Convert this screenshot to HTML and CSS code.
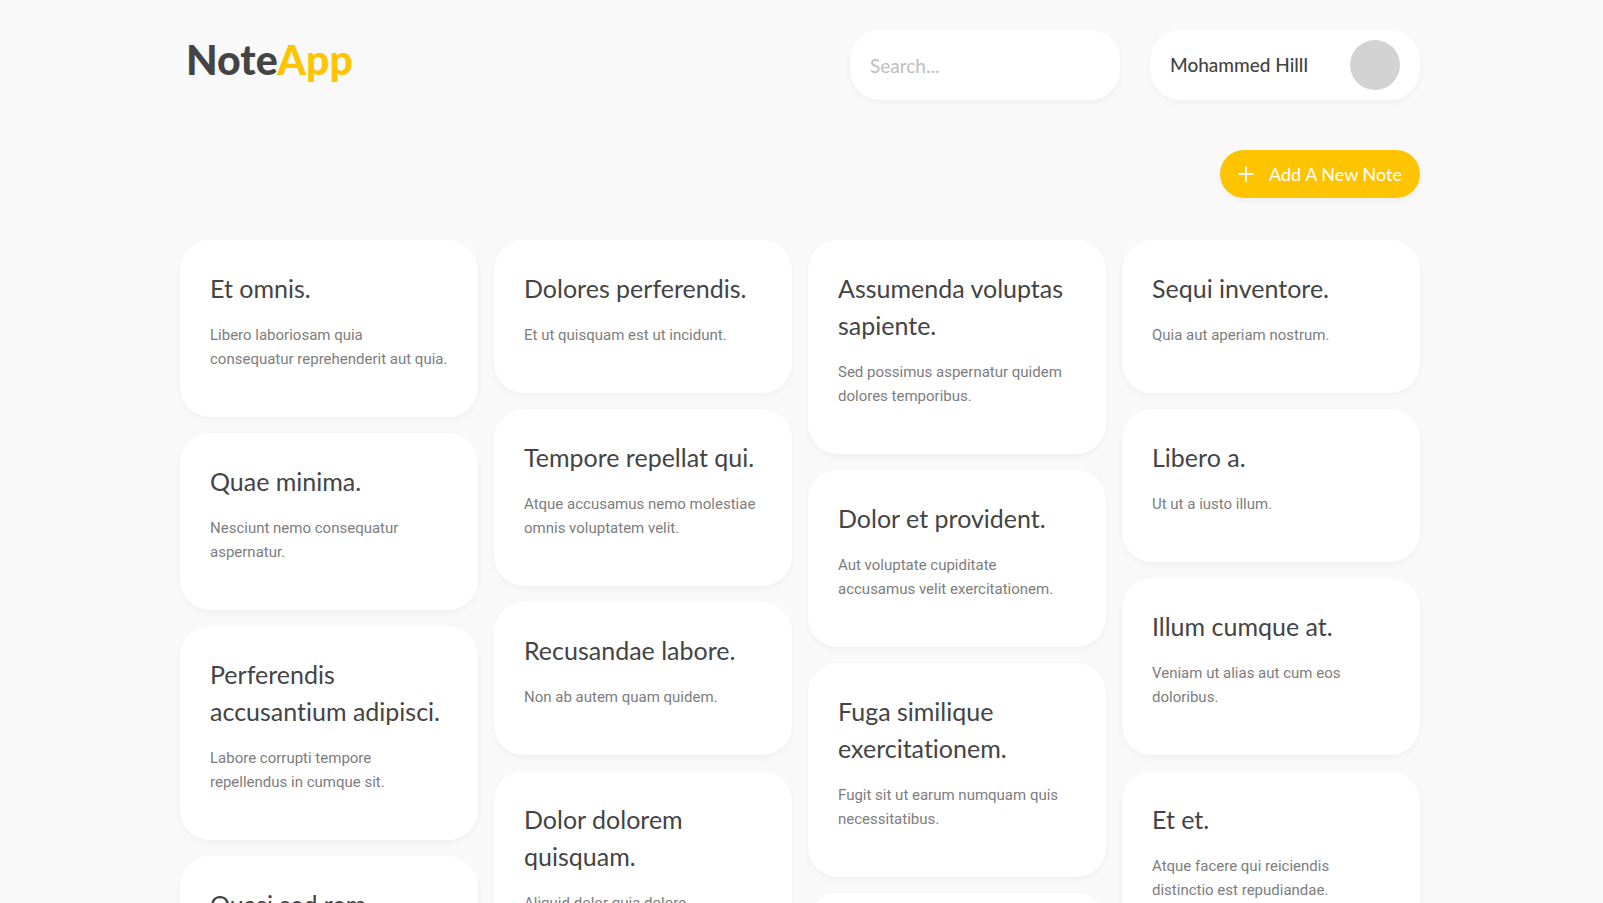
FILE: index.html
```html
<!DOCTYPE html>
<html lang="en">
<head>
<meta charset="utf-8">
<meta name="viewport" content="width=device-width, initial-scale=1">
<title>NoteApp</title>
<link rel="stylesheet" href="styles.css">
</head>
<body>
<div class="container">
  <header class="header">
    <a class="logo" href="#">Note<span class="logo-accent">App</span></a>
    <div class="header-tools">
      <input class="search" type="search" placeholder="Search..." aria-label="Search notes">
      <button class="profile" type="button"><span>Mohammed Hilll</span><span class="avatar"></span></button>
    </div>
  </header>
  <div class="actions">
    <button class="add-note" type="button">
      <svg class="add-icon" viewBox="0 0 24 24" aria-hidden="true"><path d="M19.500 13H13v6.500h-2V13H4.500v-2H11V4.500h2V11h6.500z" fill="currentColor"/></svg>
      Add A New Note
    </button>
  </div>
  <main class="notes">
    <div class="column">
      <article class="note"><h2>Et omnis.</h2><p>Libero laboriosam quia consequatur reprehenderit aut quia.</p></article>
      <article class="note"><h2>Quae minima.</h2><p>Nesciunt nemo consequatur aspernatur.</p></article>
      <article class="note"><h2>Perferendis accusantium adipisci.</h2><p>Labore corrupti tempore repellendus in cumque sit.</p></article>
      <article class="note"><h2>Quasi sed rem.</h2></article>
    </div>
    <div class="column">
      <article class="note"><h2>Dolores perferendis.</h2><p>Et ut quisquam est ut incidunt.</p></article>
      <article class="note"><h2>Tempore repellat qui.</h2><p>Atque accusamus nemo molestiae omnis voluptatem velit.</p></article>
      <article class="note"><h2>Recusandae labore.</h2><p>Non ab autem quam quidem.</p></article>
      <article class="note"><h2>Dolor dolorem quisquam.</h2><p>Aliquid dolor quia dolore</p></article>
    </div>
    <div class="column">
      <article class="note"><h2>Assumenda voluptas sapiente.</h2><p>Sed possimus aspernatur quidem dolores temporibus.</p></article>
      <article class="note"><h2>Dolor et provident.</h2><p>Aut voluptate cupiditate accusamus velit exercitationem.</p></article>
      <article class="note"><h2>Fuga similique exercitationem.</h2><p>Fugit sit ut earum numquam quis necessitatibus.</p></article>
      <article class="note"></article>
    </div>
    <div class="column">
      <article class="note"><h2>Sequi inventore.</h2><p>Quia aut aperiam nostrum.</p></article>
      <article class="note"><h2>Libero a.</h2><p>Ut ut a iusto illum.</p></article>
      <article class="note"><h2>Illum cumque at.</h2><p>Veniam ut alias aut cum eos doloribus.</p></article>
      <article class="note"><h2>Et et.</h2><p>Atque facere qui reiciendis distinctio est repudiandae.</p></article>
    </div>
  </main>
</div>
</body>
</html>
```

FILE: styles.css
```css
* { box-sizing: border-box; }

:root {
  --ink: #444;
  --muted: #7d7d7d;
  --accent: #ffc400;
  --shadow: 0 3px 6px rgba(0, 0, 0, 0.04);
  --display: "Google Sans", "Product Sans", Lato, sans-serif;
}

body {
  height: 100vh;
  margin: 0;
  padding: 0 3px 0 0;
  overflow: hidden;
  background: #f9f9f9;
  color: var(--ink);
  font-family: Roboto, sans-serif;
  font-variant-ligatures: no-common-ligatures;
}

.container {
  max-width: 1240px;
  margin: 0 auto;
  padding-top: 30px;
}

.header {
  display: flex;
  align-items: flex-start;
  justify-content: space-between;
}

.logo {
  padding: 0 6px;
  color: var(--ink);
  font-family: var(--display);
  font-size: 41px;
  font-weight: 900;
  line-height: 60px;
  text-decoration: none;
}

.logo-accent { color: var(--accent); }

.header-tools {
  display: flex;
  gap: 30px;
}

.search,
.profile {
  width: 270px;
  height: 70px;
  padding: 0 20px;
  border: 0;
  border-radius: 30px;
  background: #fff;
  box-shadow: var(--shadow);
  color: var(--ink);
  font-family: var(--display);
  font-size: 19px;
  line-height: 24px;
}

.search { appearance: none; outline: 0; }
.search::placeholder { color: #bdbdbd; opacity: 1; }

.profile {
  display: flex;
  align-items: center;
  justify-content: space-between;
  font-weight: 500;
}

.avatar {
  width: 50px;
  height: 50px;
  border-radius: 50%;
  background: #d3d3d3;
}

.actions {
  display: flex;
  justify-content: flex-end;
  margin: 50px 0 42px;
}

.add-note {
  display: flex;
  align-items: center;
  gap: 11px;
  width: 200px;
  height: 48px;
  padding: 0 14px;
  border: 0;
  border-radius: 24px;
  background: var(--accent);
  box-shadow: var(--shadow);
  color: #fff;
  font-family: var(--display);
  font-size: 18px;
  line-height: 24px;
  white-space: nowrap;
}

.add-icon {
  flex: none;
  width: 24px;
  height: 24px;
}

.notes {
  display: grid;
  grid-template-columns: repeat(4, minmax(0, 1fr));
  gap: 16px;
}

.column {
  display: flex;
  flex-direction: column;
  gap: 16px;
}

.note {
  min-height: 153px;
  padding: 30px;
  border-radius: 30px;
  background: #fff;
  box-shadow: var(--shadow);
}

.note h2 {
  margin: 0;
  font-family: var(--display);
  font-size: 25px;
  font-weight: 400;
  line-height: 37px;
}

.note p {
  margin: 16px 0;
  color: var(--muted);
  font-size: 15px;
  line-height: 24px;
}
```
